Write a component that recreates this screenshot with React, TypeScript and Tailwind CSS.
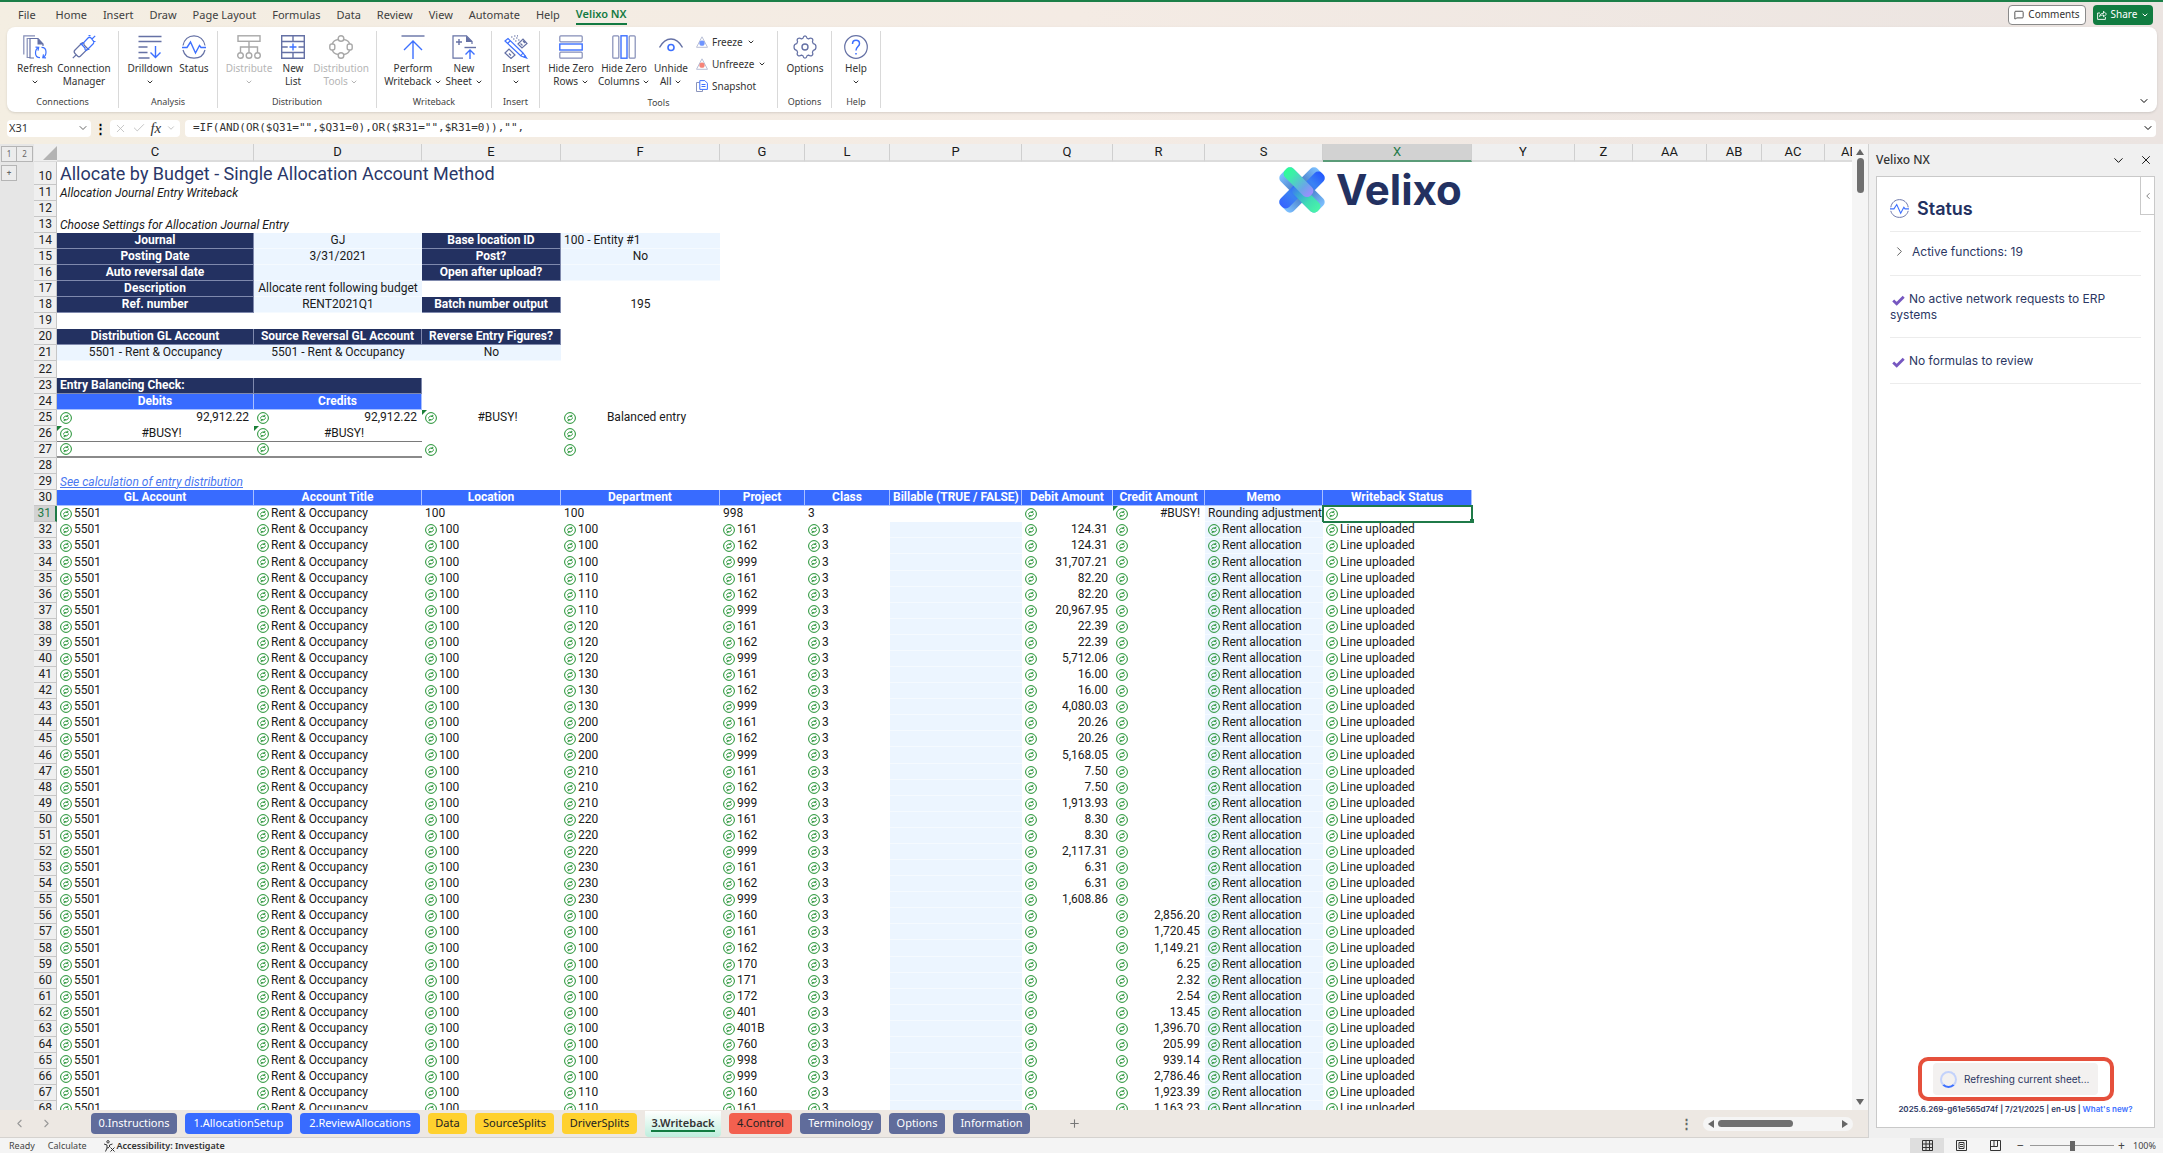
import type { ReactNode } from "react";
import clsx from "clsx";
import { Check, ChevronDown, ChevronLeft, ChevronRight, MessageSquare, Plus, X } from "lucide-react";

type Tone = "navy" | "blue" | "light";

type Cell = {
  text?: string;
  icon?: boolean; // calculated-function marker
  tone?: Tone;
  align?: "left" | "center" | "right";
  flag?: boolean; // error triangle in the corner
  selected?: boolean;
  underline?: "thin" | "thick";
};

const COLUMNS = [
  { name: "C", width: "w-[197px]" },
  { name: "D", width: "w-[168px]" },
  { name: "E", width: "w-[139px]" },
  { name: "F", width: "w-[159px]" },
  { name: "G", width: "w-[85px]" },
  { name: "L", width: "w-[85px]" },
  { name: "P", width: "w-[132px]" },
  { name: "Q", width: "w-[91px]" },
  { name: "R", width: "w-[92px]" },
  { name: "S", width: "w-[118px]" },
  { name: "X", width: "w-[149px]" },
  { name: "Y", width: "w-[103px]" },
  { name: "Z", width: "w-[58px]" },
  { name: "AA", width: "w-[74px]" },
  { name: "AB", width: "w-[55px]" },
  { name: "AC", width: "w-[63px]" },
];

const navy = (text: string): Cell => ({ text, tone: "navy", align: "center" });
const blue = (text: string): Cell => ({ text, tone: "blue", align: "center" });
const input = (text = "", align: Cell["align"] = "center"): Cell => ({ text, tone: "light", align });
const fn = (text = "", align: Cell["align"] = "left"): Cell => ({ text, icon: true, align });

// Rows above the journal lines, keyed by sheet row number
const TOP_ROWS: Record<number, Cell[]> = {
  14: [navy("Journal"), input("GJ"), navy("Base location ID"), input("100 - Entity #1", "left")],
  15: [navy("Posting Date"), input("3/31/2021"), navy("Post?"), input("No")],
  16: [navy("Auto reversal date"), input(), navy("Open after upload?"), input()],
  17: [navy("Description"), input("Allocate rent following budget")],
  18: [navy("Ref. number"), input("RENT2021Q1"), navy("Batch number output"), { text: "195", align: "center" }],
  20: [navy("Distribution GL Account"), navy("Source Reversal GL Account"), navy("Reverse Entry Figures?")],
  21: [input("5501 - Rent & Occupancy"), input("5501 - Rent & Occupancy"), input("No")],
  23: [{ text: "Entry Balancing Check:", tone: "navy" }, { tone: "navy" }],
  24: [blue("Debits"), blue("Credits")],
  25: [
    fn("92,912.22", "right"),
    fn("92,912.22", "right"),
    { ...fn("#BUSY!", "center"), flag: true },
    fn("Balanced entry", "center"),
  ],
  26: [
    { ...fn("#BUSY!", "center"), flag: true, underline: "thin" },
    { ...fn("#BUSY!", "center"), flag: true, underline: "thin" },
    {},
    fn(),
  ],
  27: [{ ...fn(), underline: "thick" }, { ...fn(), underline: "thick" }, fn(), fn()],
  30: [
    "GL Account",
    "Account Title",
    "Location",
    "Department",
    "Project",
    "Class",
    "Billable (TRUE / FALSE)",
    "Debit Amount",
    "Credit Amount",
    "Memo",
    "Writeback Status",
  ].map(blue),
  31: [
    fn("5501"),
    fn("Rent & Occupancy"),
    { text: "100" },
    { text: "100" },
    { text: "998" },
    { text: "3" },
    {},
    fn(),
    { ...fn("#BUSY!", "right"), flag: true },
    { text: "Rounding adjustment", tone: "light" },
    { ...fn(), selected: true },
  ],
};

// department, project, debit, credit
const LINES: [string, string, string, string][] = [
  ["100", "161", "124.31", ""],
  ["100", "162", "124.31", ""],
  ["100", "999", "31,707.21", ""],
  ["110", "161", "82.20", ""],
  ["110", "162", "82.20", ""],
  ["110", "999", "20,967.95", ""],
  ["120", "161", "22.39", ""],
  ["120", "162", "22.39", ""],
  ["120", "999", "5,712.06", ""],
  ["130", "161", "16.00", ""],
  ["130", "162", "16.00", ""],
  ["130", "999", "4,080.03", ""],
  ["200", "161", "20.26", ""],
  ["200", "162", "20.26", ""],
  ["200", "999", "5,168.05", ""],
  ["210", "161", "7.50", ""],
  ["210", "162", "7.50", ""],
  ["210", "999", "1,913.93", ""],
  ["220", "161", "8.30", ""],
  ["220", "162", "8.30", ""],
  ["220", "999", "2,117.31", ""],
  ["230", "161", "6.31", ""],
  ["230", "162", "6.31", ""],
  ["230", "999", "1,608.86", ""],
  ["100", "160", "", "2,856.20"],
  ["100", "161", "", "1,720.45"],
  ["100", "162", "", "1,149.21"],
  ["100", "170", "", "6.25"],
  ["100", "171", "", "2.32"],
  ["100", "172", "", "2.54"],
  ["100", "401", "", "13.45"],
  ["100", "401B", "", "1,396.70"],
  ["100", "760", "", "205.99"],
  ["100", "998", "", "939.14"],
  ["100", "999", "", "2,786.46"],
  ["110", "160", "", "1,923.39"],
  ["110", "161", "", "1,163.23"],
];

const lineCells = ([dept, project, debit, credit]: [string, string, string, string]): Cell[] => [
  fn("5501"),
  fn("Rent & Occupancy"),
  fn("100"),
  fn(dept),
  fn(project),
  fn("3"),
  { tone: "light" },
  fn(debit, "right"),
  fn(credit, "right"),
  { ...fn("Rent allocation"), tone: "light" },
  fn("Line uploaded"),
];

const SHEET_TABS = [
  { name: "0.Instructions", cls: "w-[86px] bg-[#606c9b] text-white" },
  { name: "1.AllocationSetup", cls: "w-[107px] bg-[#386bff] text-white" },
  { name: "2.ReviewAllocations", cls: "w-[120px] bg-[#386bff] text-white" },
  { name: "Data", cls: "w-[39px] bg-[#ffd12e] text-[#222]" },
  { name: "SourceSplits", cls: "w-[79px] bg-[#ffd12e] text-[#222]" },
  { name: "DriverSplits", cls: "w-[75px] bg-[#ffd12e] text-[#222]" },
  { name: "3.Writeback", active: true, cls: "w-[76px]" },
  { name: "4.Control", cls: "w-[63px] bg-[#f3604f] text-[#222]" },
  { name: "Terminology", cls: "w-[81px] bg-[#606c9b] text-white" },
  { name: "Options", cls: "w-[56px] bg-[#606c9b] text-white" },
  { name: "Information", cls: "w-[77px] bg-[#606c9b] text-white" },
];

/* ---------- icons ---------- */

const SLATE = "#6571a5";
const AZURE = "#3d70ff";

function Glyph({ children, size = 24 }: { children: ReactNode; size?: number }) {
  return (
    <svg width={size} height={size} viewBox="0 0 24 24" fill="none" strokeWidth="1.2" aria-hidden="true" className="shrink-0">
      {children}
    </svg>
  );
}

const RefreshIcon = () => (
  <Glyph>
    <path d="M.8 19.500V.8H12M7 22.500H4.200V3.500H7" stroke={SLATE} opacity=".8" />
    <path d="M11 23H7V3.500h8l5 5.500v2" stroke={SLATE} />
    <path d="M14.500 3.500v6h6z" fill={SLATE} />
    <path d="M12.500 18c0-3 1-4.500 3-5.500m-3-.3 3.200.2-.7 3.200M23 17c0 3-1 4.500-3 5.500m3 .3-3.200-.2.7-3.200M18.500 12.300c3 0 4.500 1.700 4.500 4.700M17 22.700c-3 0-4.500-1.700-4.500-4.700" stroke={AZURE} />
  </Glyph>
);

const ConnectionIcon = () => (
  <Glyph>
    <path d="M.8 23.200 4 20M3 15l7-7c1-1 2 0 2 1v1l4.500 4.500H15L8.500 21c-1 1-2 1-3 0L3 18.500c-1-1-1-2.500 0-3.500z" stroke={SLATE} />
    <path d="M23.200.8 20 4M21 9l-6 6c-1 .8-2 0-2-1v-1l-4-4.200h1.500L16 3c1-1 2-1 3 0l2 2.500c1 1 1 2.500 0 3.500zM16.500.5h2M21 6.500h2.500" stroke={AZURE} />
  </Glyph>
);

const DrilldownIcon = () => (
  <Glyph>
    <path d="M.5 1.500h23M.5 6.500h23M.5 12h9M.5 17.500h9M.5 23h11" stroke={SLATE} strokeWidth="1.400" />
    <path d="M17.500 11v11.500M12.500 17.500l5 5 5-5" stroke={AZURE} strokeWidth="1.400" />
  </Glyph>
);

const StatusIcon = ({ size = 24 }: { size?: number }) => (
  <Glyph size={size}>
    <path d="M1 10.500C2 4.500 6.500.8 12 .8S22 4.500 23 10.500M1 15c1.300 5 5.500 8.200 11 8.200S21.700 20 23 15" stroke={SLATE} />
    <path d="M0 12.500h5L8.500 7l5 11 4-7.500 1.500 2h5" stroke={AZURE} strokeWidth="1.400" />
  </Glyph>
);

const DistributeIcon = () => (
  <Glyph>
    <g stroke="#a8a8a8" strokeWidth="1.400">
      <rect x="1" y=".8" width="22" height="5.500" />
      <path d="M12 6.500v11M3.500 17.500V12h17v5.500" />
      <ellipse cx="3.500" cy="20.500" rx="2.800" ry="2.800" />
      <ellipse cx="12" cy="20.500" rx="2.800" ry="2.800" />
      <ellipse cx="20.500" cy="20.500" rx="2.800" ry="2.800" />
    </g>
  </Glyph>
);

const NewListIcon = () => (
  <Glyph>
    <path d="M.7.800h22.600v22.400H.7zM.7 6.500h22.600M.7 12h6M17.500 12h5.800M.7 17.500h22.600M12 .8v5.700M12 17.500v5.700" stroke={SLATE} strokeWidth="1.400" />
    <path d="M12 8.500v7M8.500 12h7" stroke={AZURE} strokeWidth="1.400" />
  </Glyph>
);

const DistributionToolsIcon = () => (
  <Glyph>
    <g stroke="#a8a8a8" strokeWidth="1.400">
      <circle cx="12" cy="3.500" r="2.800" />
      <circle cx="12" cy="20.500" r="2.800" />
      <rect x=".8" y="9" width="5" height="6" rx="2" />
      <rect x="18.200" y="9" width="5" height="6" rx="2" />
      <path d="M9 4.500C6 5 4 6.500 3.300 9M15 4.500c3 .5 5 2 5.700 4.500M9 19.500c-3-.5-5-2-5.700-4.500M15 19.500c3-.5 5-2 5.700-4.500" />
    </g>
  </Glyph>
);

const WritebackIcon = () => (
  <Glyph>
    <path d="M.5 1h23" stroke={SLATE} strokeWidth="1.400" />
    <path d="M12 24V7M3 15l9-9 9 9" stroke={AZURE} strokeWidth="1.400" />
  </Glyph>
);

const NewSheetIcon = () => (
  <Glyph>
    <path d="M11 23.200H1V.8h13.500L20 6.500V9" stroke={SLATE} />
    <path d="M14 .8V7h6.500z" fill={SLATE} />
    <path d="M4 7h6M7 4v6" stroke={SLATE} strokeWidth="1.400" />
    <path d="M12.500 12.500H24" stroke={SLATE} strokeWidth="1.400" />
    <path d="M18 24v-9M13.500 19.500 18 15l4.500 4.500" stroke={AZURE} strokeWidth="1.400" />
  </Glyph>
);

const InsertIcon = () => (
  <Glyph>
    <path d="m1 18 4-4 6 6-4 3.500zM14 9l5-5 4 4.500-5 4.500zM5 18.500l2 2M16.500 8.500l2 2M19 6l2 2" stroke={SLATE} />
    <path d="m1 6 3-2.500L19 18l3.500 5-5.500-2zM4 8l2.500-2.500M17 20.500l2-2.500" stroke={AZURE} />
    <path d="M22.500 23 19 22l2.500-2z" fill={AZURE} />
    <path d="M7 2h1.500M10 1h1.500M9 4h1.500M12 3h1.500M11 6h1.500M14 5h1.500M13 .8h1" stroke={SLATE} />
  </Glyph>
);

const HideRowsIcon = () => (
  <Glyph>
    <rect x=".8" y=".8" width="22.400" height="6" rx="1" stroke={SLATE} opacity=".8" />
    <rect x=".8" y="9" width="22.400" height="6" stroke={AZURE} strokeWidth="1.400" />
    <rect x=".8" y="17.200" width="22.400" height="6" rx="1" stroke={SLATE} opacity=".8" />
  </Glyph>
);

const HideColumnsIcon = () => (
  <Glyph>
    <rect x=".8" y=".8" width="6" height="22.400" rx="1" stroke={SLATE} opacity=".8" />
    <rect x="9" y=".8" width="6" height="22.400" stroke={AZURE} strokeWidth="1.400" />
    <rect x="17.200" y=".8" width="6" height="22.400" rx="1" stroke={SLATE} opacity=".8" />
  </Glyph>
);

const UnhideIcon = () => (
  <Glyph>
    <path d="M.5 12.500C3.500 7 7.500 4 12 4s8.500 3 11.500 8.500" stroke={SLATE} strokeWidth="1.400" />
    <circle cx="12" cy="12.500" r="3" stroke={AZURE} strokeWidth="1.600" />
  </Glyph>
);

const OptionsIcon = () => (
  <Glyph>
    <path
      d="M10 3.200q.5-2.400 2-2.400t2 2.400l1.500.7q2-1.500 3.500-.4t.4 3.300l.9 1.900q2.700.4 2.700 3.300t-2.700 3.300l-.9 1.900q1.100 2.200-.4 3.300t-3.500-.4l-1.500.7q-.5 2.400-2 2.400t-2-2.400l-1.500-.7q-2 1.500-3.500.4t-.4-3.300l-.9-1.900Q1 14.900 1 12t2.700-3.300l.9-1.900q-1.100-2.200.4-3.300t3.500.4z"
      stroke={SLATE}
      strokeLinejoin="round"
    />
    <circle cx="12" cy="12" r="3" stroke={SLATE} strokeWidth="1.400" />
  </Glyph>
);

const HelpIcon = () => (
  <Glyph>
    <circle cx="12" cy="12" r="11.300" stroke={SLATE} />
    <path d="M8.500 9c0-2.300 1.500-3.700 3.500-3.700s3.500 1.400 3.500 3.400c0 2.800-3.500 3-3.500 6.800M12 18v1.500" stroke={AZURE} strokeWidth="1.500" />
  </Glyph>
);

const FreezeIcon = ({ color }: { color: string }) => (
  <svg width="12" height="12" viewBox="0 0 12 12" fill="none" aria-hidden="true">
    <path d="M6 .8 11.500 11.300H.5z" stroke="#b9bfd6" />
    <circle cx="6" cy="7.200" r="2.600" fill={color} opacity=".75" />
  </svg>
);

const SnapshotIcon = () => (
  <svg width="12" height="12" viewBox="0 0 12 12" fill="none" aria-hidden="true">
    <path d="M3.500 2.500h-3v9h6v-2" stroke="#8a94bb" />
    <path d="M3.800.6h5l2.600 2.600v6.200H3.800zM5.500 4.500h4M5.500 6.500h4" stroke={AZURE} />
  </svg>
);

// Green circled arrows shown in front of every calculated value
const FnIcon = () => (
  <svg width="12" height="12" viewBox="0 0 12 12" fill="none" stroke="#1f9030" aria-hidden="true" className="shrink-0">
    <circle cx="6" cy="6" r="5.400" />
    <path d="M3.600 6.500c0-1.700 1.200-2.700 3.900-2.500M7.800 2.800v1.600H6.200M8.400 5.500c0 1.700-1.200 2.700-3.900 2.500M4.200 9.200V7.600h1.600" />
  </svg>
);

const VelixoMark = () => (
  <svg width="48" height="48" viewBox="0 0 48 48" aria-hidden="true">
    <defs>
      <linearGradient id="vx-top" x1="0" y1="0" x2="1" y2="0">
        <stop offset="0" stopColor="#2cff96" />
        <stop offset=".25" stopColor="#3dedaa" />
        <stop offset=".7" stopColor="#6ba6e8" />
        <stop offset="1" stopColor="#a08cff" />
      </linearGradient>
      <linearGradient id="vx-low" x1="0" y1="0" x2="1" y2="0">
        <stop offset="0" stopColor="#3a78f2" />
        <stop offset=".6" stopColor="#3fdcb4" />
        <stop offset="1" stopColor="#4af5a8" />
      </linearGradient>
      <linearGradient id="vx-blue" x1="0" y1="0" x2="1" y2="0">
        <stop offset="0" stopColor="#3763ff" />
        <stop offset=".5" stopColor="#3b82f2" />
        <stop offset="1" stopColor="#2457ff" />
      </linearGradient>
      <linearGradient id="vx-fold" x1="0" y1="0" x2="1" y2="0">
        <stop offset="0" stopColor="#7dc0ff" />
        <stop offset=".35" stopColor="#4f86cf" />
        <stop offset=".65" stopColor="#4f86cf" />
        <stop offset="1" stopColor="#7dc0ff" />
      </linearGradient>
    </defs>
    <g transform="rotate(-45 24 24)">
      <rect x="-2" y="15" width="52" height="18" rx="5" fill="url(#vx-fold)" />
      <rect x="22" y="21" width="28" height="12" rx="5" fill="url(#vx-blue)" />
    </g>
    <g transform="rotate(45 24 24)">
      <rect x="-2" y="15" width="52" height="18" rx="5" fill="url(#vx-fold)" />
    </g>
    <rect x="-2" y="15" width="30" height="12" rx="5" transform="rotate(-45 24 24)" fill="url(#vx-blue)" />
    <g transform="rotate(45 24 24)">
      <rect x="16" y="21" width="34" height="12" rx="5" fill="url(#vx-low)" />
      <rect x="-2" y="15" width="36" height="12" rx="5" fill="url(#vx-top)" />
    </g>
  </svg>
);

/* ---------- ribbon ---------- */

const MENUS = ["File", "Home", "Insert", "Draw", "Page Layout", "Formulas", "Data", "Review", "View", "Automate", "Help"];

function RibbonButton({
  icon,
  lines,
  width,
  menu,
  disabled,
}: {
  icon: ReactNode;
  lines: string[];
  width: string;
  menu?: boolean;
  disabled?: boolean;
}) {
  const caret = <ChevronDown size={8} strokeWidth={3} className="inline-block" />;
  return (
    <button
      type="button"
      disabled={disabled}
      className={clsx("flex flex-col items-center text-[10px] leading-[13px]", width, disabled ? "text-[#b5b5b5]" : "text-[#333]")}
    >
      <span className="mb-[3px]">{icon}</span>
      {lines.map((line, i) => (
        <span key={line} className="whitespace-nowrap">
          {line}
          {menu && i === 1 ? <> {caret}</> : null}
        </span>
      ))}
      {menu && lines.length === 1 ? <span>{caret}</span> : null}
    </button>
  );
}

function RibbonGroup({ label, width, children }: { label: string; width: string; children: ReactNode }) {
  return (
    <section className={clsx("flex h-[77px] flex-col justify-between border-r border-[#d9d9d9] pt-1", width)}>
      <div className="flex pl-1.5">{children}</div>
      <span className="text-center text-[9px] leading-3 text-[#444]">{label}</span>
    </section>
  );
}

function SmallTool({ icon, label, menu }: { icon: ReactNode; label: string; menu?: boolean }) {
  return (
    <button type="button" className="flex h-[22px] items-center gap-1 text-[10px] text-[#333]">
      {icon}
      {label}
      {menu ? <ChevronDown size={8} strokeWidth={3} /> : null}
    </button>
  );
}

function Ribbon() {
  return (
    <header>
      <div className="flex h-[25px] items-center pr-2.5 pl-2.5">
        <nav className="flex flex-1 items-center pt-0.5 text-[11px] text-[#404040]">
          {MENUS.map((m) => (
            <button key={m} type="button" className="px-2 first:mr-1">
              {m}
            </button>
          ))}
          <button type="button" className="mx-2 border-b-2 border-[#137a42] font-semibold text-[#137a42]">
            Velixo NX
          </button>
        </nav>
        <button
          type="button"
          className="mr-[7px] flex h-5 w-[78px] items-center justify-center gap-1 rounded border border-[#8a8a8a] bg-white text-[10px] text-[#333]"
        >
          <MessageSquare size={10} /> Comments
        </button>
        <button type="button" className="flex h-5 w-[60px] items-center justify-center gap-1 rounded bg-[#117c41] text-[10px] text-white">
          <svg width="10" height="10" viewBox="0 0 10 10" fill="none" stroke="currentColor" aria-hidden="true">
            <path d="M3 3H.6v6.400h7.800V7M2.500 6.500c.3-2 1.600-3.200 4-3.200V1.200l3 3-3 2.600V5c-1.700 0-3 .4-4 1.500z" strokeWidth=".9" />
          </svg>
          Share <ChevronDown size={8} strokeWidth={3} />
        </button>
      </div>

      <div className="mr-1.5 ml-[7px] flex h-[85px] rounded-lg bg-white pt-1 shadow-sm">
        <RibbonGroup label="Connections" width="w-[112px]">
          <RibbonButton icon={<RefreshIcon />} lines={["Refresh"]} width="w-11" menu />
          <RibbonButton icon={<ConnectionIcon />} lines={["Connection", "Manager"]} width="w-[54px]" />
        </RibbonGroup>
        <RibbonGroup label="Analysis" width="w-[99px]">
          <RibbonButton icon={<DrilldownIcon />} lines={["Drilldown"]} width="w-[50px]" menu />
          <RibbonButton icon={<StatusIcon />} lines={["Status"]} width="w-[38px]" />
        </RibbonGroup>
        <RibbonGroup label="Distribution" width="w-[159px]">
          <RibbonButton icon={<DistributeIcon />} lines={["Distribute"]} width="w-[50px]" menu disabled />
          <RibbonButton icon={<NewListIcon />} lines={["New", "List"]} width="w-[38px]" />
          <RibbonButton icon={<DistributionToolsIcon />} lines={["Distribution", "Tools"]} width="w-[58px]" menu disabled />
        </RibbonGroup>
        <RibbonGroup label="Writeback" width="w-[115px]">
          <RibbonButton icon={<WritebackIcon />} lines={["Perform", "Writeback"]} width="w-[60px]" menu />
          <RibbonButton icon={<NewSheetIcon />} lines={["New", "Sheet"]} width="w-[42px]" menu />
        </RibbonGroup>
        <RibbonGroup label="Insert" width="w-[48px]">
          <RibbonButton icon={<InsertIcon />} lines={["Insert"]} width="w-9" menu />
        </RibbonGroup>
        <RibbonGroup label="Tools" width="w-[238px]">
          <RibbonButton icon={<HideRowsIcon />} lines={["Hide Zero", "Rows"]} width="w-[50px]" menu />
          <RibbonButton icon={<HideColumnsIcon />} lines={["Hide Zero", "Columns"]} width="w-[56px]" menu />
          <RibbonButton icon={<UnhideIcon />} lines={["Unhide", "All"]} width="w-[38px]" menu />
          <div className="-mt-1 ml-1.5 flex flex-col">
            <SmallTool icon={<FreezeIcon color={AZURE} />} label="Freeze" menu />
            <SmallTool icon={<FreezeIcon color="#f2594b" />} label="Unfreeze" menu />
            <SmallTool icon={<SnapshotIcon />} label="Snapshot" />
          </div>
        </RibbonGroup>
        <RibbonGroup label="Options" width="w-[54px]">
          <RibbonButton icon={<OptionsIcon />} lines={["Options"]} width="w-[42px]" />
        </RibbonGroup>
        <RibbonGroup label="Help" width="w-[49px]">
          <RibbonButton icon={<HelpIcon />} lines={["Help"]} width="w-9" menu />
        </RibbonGroup>
        <button type="button" aria-label="Ribbon display options" className="mt-auto mr-[7px] mb-[5px] ml-auto">
          <ChevronDown size={12} />
        </button>
      </div>

      {/* Name box and formula */}
      <div className="flex h-8 items-center pr-[7px] pl-[7px]">
        <div className="flex h-[17px] w-[84px] items-center rounded-sm bg-white pr-0.5">
          <input aria-label="Name box" defaultValue="X31" className="w-full min-w-0 px-0.5 text-[11px] text-[#333] outline-none" />
          <ChevronDown size={12} className="shrink-0 text-[#666]" />
        </div>
        <span className="w-[19px] text-center text-[13px] leading-4 font-bold">⋮</span>
        <div className="flex h-[17px] w-[70px] items-center justify-between rounded-sm bg-white px-1 text-[#bbb]">
          <X size={13} strokeWidth={1.500} />
          <Check size={14} strokeWidth={1.500} />
          <span className="font-['Liberation_Serif',serif] text-[15px] leading-4 text-[#333] italic">fx</span>
          <ChevronDown size={10} />
        </div>
        <div className="ml-[5px] flex h-[17px] flex-1 items-center rounded-sm bg-white pr-0.5">
          <input
            aria-label="Formula bar"
            defaultValue={'=IF(AND(OR($Q31="",$Q31=0),OR($R31="",$R31=0)),"",'}
            className="w-full px-2 font-['DejaVu_Sans_Mono',monospace] text-[11px] text-[#333] outline-none"
          />
          <ChevronDown size={12} className="shrink-0" />
        </div>
      </div>
    </header>
  );
}

/* ---------- grid ---------- */

function SheetCell({ cell }: { cell: Cell }) {
  const { text, icon, tone, align = "left", flag, selected, underline } = cell;
  return (
    <td
      className={clsx(
        "relative p-0",
        tone === "navy" && "border-r border-b border-[#7f89ad] bg-[#233161] font-bold text-white",
        tone === "blue" && "border-r border-b border-[#a9c0ff] bg-[#386bff] font-bold text-white",
        tone === "light" && "border-b border-[#f5faff] bg-[#ecf5ff]",
        !tone && !underline && "border-b border-transparent",
        underline === "thin" && "border-b border-[#7a7a7a]",
        underline === "thick" && "border-b-2 border-[#8a8a8a]",
        selected && "outline-2 -outline-offset-1 outline-[#1f7a48]",
      )}
    >
      <div className={clsx("flex items-center px-[3px]", underline === "thick" ? "h-3.5" : "h-[15px]")}>
        {icon ? <FnIcon /> : null}
        <span
          className={clsx(
            "flex-1",
            icon && align === "left" && "pl-0.5",
            align === "center" && "flex justify-center",
            align === "right" && "pr-0.5 text-right",
          )}
        >
          {text}
        </span>
      </div>
      {flag ? <span className="absolute top-0 left-0 border-t-[5px] border-r-[5px] border-t-[#1a7f37] border-r-transparent" /> : null}
      {selected ? <span className="absolute -right-0.5 -bottom-0.5 size-1 bg-[#1f7a48]" /> : null}
    </td>
  );
}

// Default row height is a hair over 16px, so every twelfth row takes the extra pixel
const rowHeight = (n: number) => {
  if (n === 10) return "h-[23px] align-bottom";
  return n % 12 === 10 ? "h-[17px]" : "h-4";
};

function RowNumber({ n }: { n: number }) {
  return (
    <th
      scope="row"
      className={clsx(
        "border-r border-b border-[#c6c6c6] p-0 pr-1 text-right font-normal",
        rowHeight(n),
        n === 31 ? "border-r-2 border-r-[#1f7a48] bg-[#d2d2d2] text-[#1f7a48]" : "bg-[#efefef] text-[#222]",
      )}
    >
      {n}
    </th>
  );
}

function SheetRow({ n, cells }: { n: number; cells: Cell[] }) {
  const rest = COLUMNS.length + 1 - cells.length;
  return (
    <tr>
      <RowNumber n={n} />
      {cells.map((cell, i) => (
        <SheetCell key={i} cell={cell} />
      ))}
      <td colSpan={rest} />
    </tr>
  );
}

function WideRow({ n, children }: { n: number; children?: ReactNode }) {
  return (
    <tr>
      <RowNumber n={n} />
      <td colSpan={COLUMNS.length + 1} className="p-0 pl-[3px]">
        {children}
      </td>
    </tr>
  );
}

function Grid() {
  const range = (from: number, to: number) => Array.from({ length: to - from + 1 }, (_, i) => from + i);
  return (
    <div className="relative min-w-0 flex-1 overflow-hidden bg-white">
      <table className="w-full table-fixed border-separate border-spacing-0 font-['Roboto',sans-serif] text-[12px] leading-[15px] whitespace-nowrap text-[#1a1a1a]">
        <colgroup>
          <col className="w-[23px]" />
          {COLUMNS.map((c) => (
            <col key={c.name} className={c.width} />
          ))}
          <col />
        </colgroup>
        <thead>
          <tr className="h-[18px] bg-[#efefef]">
            <th className="border-b border-[#dcdcdc] p-0">
              <span className="ml-auto block size-0 border-b-[14px] border-l-[14px] border-b-[#b3b3b3] border-l-transparent" />
            </th>
            {COLUMNS.map((c) => (
              <th
                key={c.name}
                scope="col"
                className={clsx(
                  "border-r border-r-[#cfcfcf] p-0 text-[13px] leading-4 font-normal",
                  c.name === "X" ? "border-b-2 border-b-[#5b9c78] bg-[#d2d2d2] text-[#1f7a48]" : "border-b-2 border-b-[#dcdcdc]",
                )}
              >
                {c.name}
              </th>
            ))}
            <th scope="col" className="overflow-hidden border-b-2 border-b-[#dcdcdc] p-0 pl-4 text-left text-[13px] leading-4 font-normal">
              AD
            </th>
          </tr>
        </thead>
        <tbody>
          <WideRow n={10}>
            <h1 className="text-[18px] leading-[22px] text-[#2a3768]">Allocate by Budget - Single Allocation Account Method</h1>
          </WideRow>
          <WideRow n={11}>
            <em>Allocation Journal Entry Writeback</em>
          </WideRow>
          <WideRow n={12} />
          <WideRow n={13}>
            <em>Choose Settings for Allocation Journal Entry</em>
          </WideRow>
          {range(14, 28).map((n) => (
            <SheetRow key={n} n={n} cells={TOP_ROWS[n] ?? []} />
          ))}
          <WideRow n={29}>
            <a href="#distribution" className="text-[#4a78f0] italic underline">
              See calculation of entry distribution
            </a>
          </WideRow>
          <SheetRow n={30} cells={TOP_ROWS[30]} />
          <SheetRow n={31} cells={TOP_ROWS[31]} />
          {LINES.map((line, i) => (
            <SheetRow key={i} n={32 + i} cells={lineCells(line)} />
          ))}
        </tbody>
      </table>

      {/* Logo floats over the cells, as an inserted picture does */}
      <div className="absolute top-[22px] left-[1244px] flex items-center gap-2.5">
        <VelixoMark />
        <span className="font-['Inter',sans-serif] text-[42px] leading-[48px] font-bold text-[#233161]">Velixo</span>
      </div>
    </div>
  );
}

function OutlineGutter() {
  const box = "flex items-center justify-center border border-[#b5b5b5] bg-[#ececec] text-[8px] text-[#666]";
  return (
    <div className="flex w-[34px] shrink-0 flex-col bg-[#e6e6e6] pt-0.5 pl-px">
      <div className="flex">
        <button type="button" className={clsx("h-4 w-4", box)}>
          1
        </button>
        <button type="button" className={clsx("h-4 w-4 border-l-0", box)}>
          2
        </button>
      </div>
      <button type="button" className={clsx("mt-[3px] h-4 w-4 font-bold", box)}>
        +
      </button>
    </div>
  );
}

const Arrow = ({ d }: { d: string }) => (
  <svg width="8" height="8" viewBox="0 0 8 8" fill="#666" aria-hidden="true" className="shrink-0">
    <path d={d} />
  </svg>
);

function SheetTabs() {
  return (
    <div className="flex h-7 items-center border-b border-[#d5d2cf] bg-[#ede8e3] pr-[15px] font-['Noto_Sans',sans-serif] text-[11px]">
      <div className="flex w-[91px] shrink-0 gap-[14px] pl-[13px] text-[#999]">
        <ChevronLeft size={13} />
        <ChevronRight size={13} />
      </div>
      <div className="flex items-center gap-2">
        {SHEET_TABS.map((t) =>
          t.active ? (
            <button
              key={t.name}
              type="button"
              className={clsx("h-[26px] self-start rounded-b bg-linear-to-b from-white to-[#bdeedd] font-semibold text-[#333]", t.cls)}
            >
              <span className="border-b-2 border-[#117c41]">{t.name}</span>
            </button>
          ) : (
            <button key={t.name} type="button" className={clsx("h-[21px] rounded whitespace-nowrap", t.cls)}>
              {t.name}
            </button>
          ),
        )}
      </div>
      <button type="button" aria-label="New sheet" className="ml-[38px] text-[#777]">
        <Plus size={13} />
      </button>
      <span className="mr-2.5 ml-auto text-[13px] font-bold text-[#666]">⋮</span>
      <div className="flex h-3.5 w-[150px] items-center rounded-full bg-[#f5f5f5] px-1">
        <Arrow d="M7 0v8L1 4z" />
        <span className="ml-[3px] h-[7px] w-[75px] rounded-full bg-[#707070]" />
        <span className="ml-auto flex">
          <Arrow d="M1 0v8l6-4z" />
        </span>
      </div>
    </div>
  );
}

/* ---------- task pane ---------- */

const CheckMark = () => (
  <svg width="13" height="11" viewBox="0 0 13 11" fill="none" aria-hidden="true" className="mr-1 ml-0.5 inline-block align-text-bottom">
    <path d="m1.200 5.500 3.500 3.300 7-7" stroke="#7657c0" strokeWidth="2.800" />
  </svg>
);

function StatusPane() {
  return (
    <aside className="flex w-[295px] shrink-0 flex-col border-l border-[#d2d2d2] bg-[#f0f0f0] pr-2 pb-2.5 pl-[7px]">
      <div className="flex h-8 items-center">
        <h2 className="flex-1 font-['Noto_Sans',sans-serif] text-[12px] font-medium text-[#333]">Velixo NX</h2>
        <button type="button" aria-label="Pane options" className="mr-[13px]">
          <ChevronDown size={15} strokeWidth={1.500} />
        </button>
        <button type="button" aria-label="Close pane" className="mr-0.5">
          <X size={14} strokeWidth={1.500} />
        </button>
      </div>
      <div className="relative flex flex-1 flex-col border border-[#c9c9c9] bg-white px-[13px] font-['Inter',sans-serif] text-[12px] leading-4 text-[#2c3763]">
        <button
          type="button"
          aria-label="Collapse"
          className="absolute -top-px -right-px flex h-[39px] w-[15px] items-center justify-center border border-[#c9c9c9] text-[#666]"
        >
          <ChevronLeft size={10} />
        </button>
        <h3 className="flex h-[55px] items-center gap-2 border-b border-[#ececec] pt-[9px] text-[18px] font-semibold text-[#233161]">
          <StatusIcon size={19} />
          Status
        </h3>
        <button type="button" className="flex h-11 items-center gap-[5px] border-b border-[#ececec] pb-1 pl-0.5 text-left">
          <ChevronRight size={15} strokeWidth={1.500} className="text-[#555]" />
          Active functions: 19
        </button>
        <p className="border-b border-[#ececec] pt-[15px] pb-3.5">
          <CheckMark />
          No active network requests to ERP systems
        </p>
        <p className="border-b border-[#ececec] pt-[15px] pb-3.5">
          <CheckMark />
          No formulas to review
        </p>

        <div className="mx-auto mt-auto flex h-11 w-[196px] items-center justify-center rounded-[10px] border-4 border-[#e5503c]">
          <div className="flex h-8 w-[165px] items-center gap-[7px] rounded bg-[#f3f1f0] pl-[7px] text-[10px]">
            <span className="size-[17px] rounded-full border-2 border-[#c3d2fb] border-b-[#3d70ff]" />
            Refreshing current sheet...
          </div>
        </div>
        <p className="mt-0.5 mb-3 text-center text-[8px] leading-3 font-semibold whitespace-nowrap">
          2025.6.269-g61e565d74f | 7/21/2025 | en-US |{" "}
          <a href="#whats-new" className="text-[#3d70ff]">
            What's new?
          </a>
        </p>
      </div>
    </aside>
  );
}

function StatusBar() {
  return (
    <footer className="flex h-[15px] shrink-0 items-center bg-[#f4f4f4] pr-[7px] pl-[9px] text-[9px] leading-3 text-[#444]">
      <span className="mr-[13px]">Ready</span>
      <span className="mr-4">Calculate</span>
      <svg width="12" height="12" viewBox="0 0 12 12" fill="none" stroke="#333" aria-hidden="true">
        <circle cx="5" cy="1.800" r="1.200" />
        <path d="M1 4l3 1v3l-1.500 3.500M9.500 4l-3 1v2M4 8l2-.5M7.500 7.500l4 4M11.500 7.500l-4 4" />
      </svg>
      <span className="ml-0.5 flex-1 font-semibold text-[#333]">Accessibility: Investigate</span>
      <div className="mr-[15px] flex items-center text-[#333]">
        <button type="button" aria-label="Normal view" className="flex h-[15px] w-[34px] items-center justify-center bg-[#dedede]">
          <svg width="11" height="11" viewBox="0 0 11 11" fill="none" stroke="currentColor" aria-hidden="true">
            <path d="M.5.500h10v10H.5zM.5 4h10M.5 7.500h10M4 .5v10M7.500.5v10" />
          </svg>
        </button>
        <button type="button" aria-label="Page layout view" className="flex w-[34px] justify-center">
          <svg width="11" height="11" viewBox="0 0 11 11" fill="none" stroke="currentColor" aria-hidden="true">
            <path d="M.5.500h10v10H.5zM3 2.500h5v6H3zM4 4.500h3M4 6.500h3" />
          </svg>
        </button>
        <button type="button" aria-label="Page break preview" className="flex w-[34px] justify-center">
          <svg width="11" height="11" viewBox="0 0 11 11" fill="none" stroke="currentColor" aria-hidden="true">
            <path d="M.5.500h10v10H.5zM4 .5v6M7.500.5v6M.5 6.500h7" />
          </svg>
        </button>
      </div>
      <span className="-ml-2.5 w-[13px] text-[12px]">−</span>
      <input
        type="range"
        aria-label="Zoom"
        min={10}
        max={190}
        defaultValue={100}
        className="h-[11px] w-[84px] appearance-none bg-[linear-gradient(#999,#999)] bg-[length:100%_1px] bg-center bg-no-repeat [&::-webkit-slider-thumb]:h-[10px] [&::-webkit-slider-thumb]:w-[5px] [&::-webkit-slider-thumb]:appearance-none [&::-webkit-slider-thumb]:bg-[#666]"
      />
      <span className="ml-1 w-[15px] text-[12px]">+</span>
      <span>100%</span>
    </footer>
  );
}

export default function App() {
  return (
    <div className="flex h-screen flex-col overflow-hidden border-t-2 border-[#1b7f48] bg-linear-to-r from-[#f4eee2] via-[#f4ebe4] to-[#ebe4e1] font-['Noto_Sans',sans-serif]">
      <Ribbon />
      <main className="flex min-h-0 flex-1">
        <div className="flex min-w-0 flex-1 flex-col">
          <div className="flex min-h-0 flex-1">
            <OutlineGutter />
            <Grid />
            <div className="flex w-4 shrink-0 flex-col items-center bg-[#f5f5f5] py-1">
              <Arrow d="M0 7h8L4 1z" />
              <span className="mt-0.5 h-[35px] w-[7px] rounded-full bg-[#707070]" />
              <span className="mt-auto flex">
                <Arrow d="M0 1h8L4 7z" />
              </span>
            </div>
          </div>
          <SheetTabs />
        </div>
        <StatusPane />
      </main>
      <StatusBar />
    </div>
  );
}
